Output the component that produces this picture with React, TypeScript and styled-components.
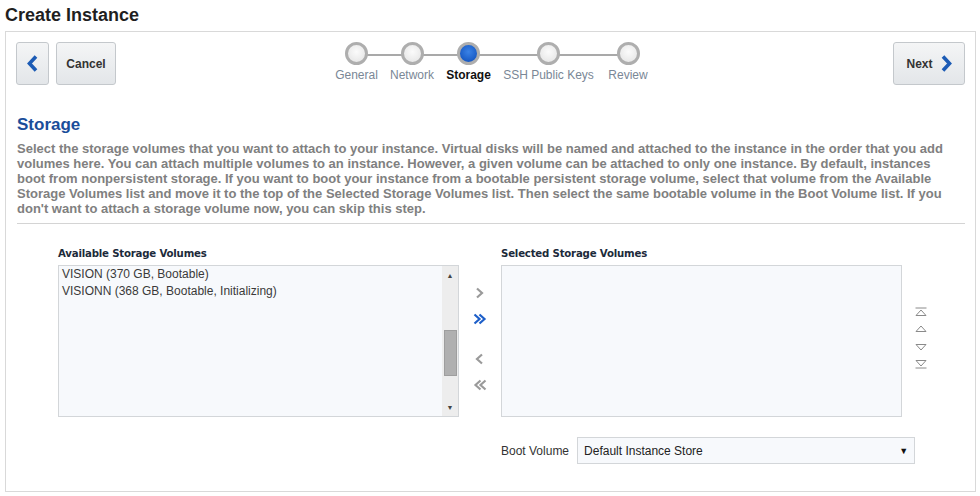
import React from "react";
import styled, { createGlobalStyle } from "styled-components";

const Global = createGlobalStyle`
  html, body { margin: 0; padding: 0; background: #fff; }
  body { font-family: Arial, "Liberation Sans", sans-serif; }
`;

const Page = styled.div`
  width: 980px;
  height: 496px;
  padding: 0 4px 0 5px;
  box-sizing: border-box;
  overflow: hidden;
`;

const Title = styled.h1`
  margin: 0;
  height: 31px;
  padding-top: 5px;
  box-sizing: border-box;
  font-size: 18px;
  font-weight: bold;
  color: #1f1f1f;
  line-height: 20px;
`;

const Panel = styled.div`
  border: 1px solid #d9d9d9;
  height: 461px;
  box-sizing: border-box;
  padding: 10px 10px 0 10px;
`;

const Toolbar = styled.div`
  display: grid;
  grid-template-columns: 1fr auto 1fr;
  align-items: start;
  height: 73px;
`;

const Left = styled.div`
  display: flex;
  gap: 7px;
`;

const Right = styled.div`
  display: flex;
  justify-content: flex-end;
`;

const Btn = styled.button<{ $w: number }>`
  width: ${(p) => p.$w}px;
  height: 43px;
  border: 1px solid #c4c8cc;
  border-radius: 3px;
  background: linear-gradient(#f4f5f6, #e3e6e9);
  font-family: Arial, "Liberation Sans", sans-serif;
  font-size: 12px;
  font-weight: bold;
  color: #333;
  display: flex;
  align-items: center;
  justify-content: center;
  gap: 8px;
  padding: 0;
  box-sizing: border-box;
`;

const Train = styled.div`
  display: flex;
  align-items: flex-start;
  margin-left: 4px;
`;

const Stop = styled.div<{ $w: number }>`
  width: ${(p) => p.$w}px;
  display: flex;
  flex-direction: column;
  align-items: center;
  position: relative;
`;

const Connector = styled.div<{ $l: number; $r: number }>`
  position: absolute;
  top: 12px;
  height: 2px;
  background: #a9a9a9;
  left: ${(p) => p.$l}px;
  right: ${(p) => p.$r}px;
`;

const Dot = styled.div<{ $active?: boolean }>`
  position: relative;
  z-index: 1;
  width: 23px;
  height: 23px;
  border-radius: 50%;
  box-sizing: border-box;
  border: 3px solid #aeaeae;
  background: ${(p) =>
    p.$active
      ? "radial-gradient(circle at 50% 40%, #3a82e6, #0c4cb8)"
      : "radial-gradient(circle at 50% 40%, #fbfbfb, #e2e2e2)"};
`;

const StopLabel = styled.div<{ $active?: boolean }>`
  margin-top: 3px;
  font-size: 12px;
  white-space: nowrap;
  color: ${(p) => (p.$active ? "#111" : "#7a8796")};
  font-weight: ${(p) => (p.$active ? "bold" : "normal")};
`;

const Heading = styled.h2`
  margin: 0;
  font-size: 17px;
  font-weight: bold;
  color: #1a4d9a;
  line-height: 20px;
  padding-left: 1px;
`;

const Para = styled.p`
  margin: 6px 0 0 1px;
  font-size: 13px;
  font-weight: bold;
  color: #808080;
  line-height: 15px;
  width: 941px;
`;

const Rule = styled.hr`
  margin: 7px 0 0 1px;
  border: 0;
  border-top: 1px solid #d4d4d4;
  width: 948px;
`;

const Shuttle = styled.div`
  display: grid;
  grid-template-columns: 401px 42px 401px 38px;
  margin: 23px 0 0 42px;
`;

const Col = styled.div`
  display: flex;
  flex-direction: column;
`;

const ListLabel = styled.div`
  font-family: "DejaVu Sans", Verdana, sans-serif;
  font-size: 10.2px;
  font-weight: bold;
  color: #1c2a3a;
  height: 14px;
  line-height: 14px;
  margin-bottom: 4px;
  letter-spacing: -0.2px;
`;

const ListBox = styled.div`
  height: 152px;
  border: 1px solid #d3d6d9;
  background: #f7f9fc;
  box-sizing: border-box;
  display: flex;
`;

const Items = styled.div`
  flex: 1;
  padding: 0 0 0 3px;
`;

const Item = styled.div`
  font-size: 12px;
  color: #3a3a3a;
  line-height: 17px;
`;

const Scroll = styled.div`
  width: 16px;
  background: #ededed;
  display: flex;
  flex-direction: column;
  align-items: center;
`;

const ScrollArrow = styled.div`
  height: 18px;
  display: flex;
  align-items: center;
  justify-content: center;
  font-size: 7px;
  color: #444;
`;

const Thumb = styled.div`
  width: 13px;
  height: 46px;
  margin-top: 46px;
  background: #b0b0b0;
  border: 1px solid #9e9e9e;
  box-sizing: border-box;
`;

const Spacer = styled.div`
  flex: 1;
`;

const MoveCol = styled.div`
  display: flex;
  flex-direction: column;
  align-items: center;
  padding-top: 33px;
`;

const IconSlot = styled.div<{ $h: number }>`
  height: ${(p) => p.$h}px;
  display: flex;
  align-items: center;
  justify-content: center;
`;

const OrderCol = styled.div`
  display: flex;
  flex-direction: column;
  align-items: center;
  padding-top: 57px;
`;

const BootRow = styled.div`
  display: flex;
  align-items: center;
  margin: 20px 0 0 485px;
  gap: 8px;
`;

const BootLabel = styled.span`
  font-size: 12px;
  color: #333;
`;

const Select = styled.div`
  width: 338px;
  height: 27px;
  border: 1px solid #d3d6d9;
  background: #f7f9fc;
  box-sizing: border-box;
  display: flex;
  align-items: center;
  justify-content: space-between;
  padding: 0 6px 0 6px;
  font-size: 12px;
  color: #222;
`;

const Caret = styled.span`
  font-size: 9px;
  color: #111;
`;

const Chevron = ({ dir, color }: { dir: "l" | "r"; color: string }) => (
  <svg width="11" height="17" viewBox="0 0 11 17">
    <path
      d={dir === "l" ? "M9 1.5 L2.5 8.5 L9 15.5" : "M2 1.5 L8.5 8.5 L2 15.5"}
      fill="none"
      stroke={color}
      strokeWidth="3.6"
    />
  </svg>
);

const Move = ({ dir, dbl, blue }: { dir: "l" | "r"; dbl?: boolean; blue?: boolean }) => {
  const stroke = blue ? "#1d5fc9" : "#9a9a9a";
  const one = (x: number) =>
    dir === "r" ? `M${x} 1.5 L${x + 5} 6 L${x} 10.5` : `M${x + 5} 1.5 L${x} 6 L${x + 5} 10.5`;
  return (
    <svg width="16" height="12" viewBox="0 0 16 12">
      {dbl ? (
        <>
          <path d={one(dir === "r" ? 2.5 : 3.5)} fill="none" stroke={stroke} strokeWidth="2.2" />
          <path d={one(dir === "r" ? 7.5 : 8.5)} fill="none" stroke={stroke} strokeWidth="2.2" />
        </>
      ) : (
        <path d={one(5)} fill="none" stroke={stroke} strokeWidth="2.2" />
      )}
    </svg>
  );
};

const Order = ({ up, bar }: { up: boolean; bar?: boolean }) => (
  <svg width="14" height="10" viewBox="0 0 14 10">
    {up ? (
      <>
        {bar && <path d="M1.5 1 H12.5" stroke="#8a8a8a" strokeWidth="1" />}
        <path d="M2 8.5 L7 3 L12 8.5 Z" fill="none" stroke="#8a8a8a" strokeWidth="1" />
      </>
    ) : (
      <>
        <path d="M2 1.5 L7 7 L12 1.5 Z" fill="none" stroke="#8a8a8a" strokeWidth="1" />
        {bar && <path d="M1.5 9 H12.5" stroke="#8a8a8a" strokeWidth="1" />}
      </>
    )}
  </svg>
);

const steps = [
  { label: "General", w: 55 },
  { label: "Network", w: 56 },
  { label: "Storage", w: 57, active: true },
  { label: "SSH Public Keys", w: 103 },
  { label: "Review", w: 56 },
];

export default function App() {
  return (
    <Page>
      <Global />
      <Title>Create Instance</Title>
      <Panel>
        <Toolbar>
          <Left>
            <Btn $w={33}>
              <Chevron dir="l" color="#1c5bb5" />
            </Btn>
            <Btn $w={60}>Cancel</Btn>
          </Left>
          <Train>
            {steps.map((s, i) => (
              <Stop key={s.label} $w={s.w}>
                {i > 0 && <Connector $l={0} $r={s.w / 2} />}
                {i < steps.length - 1 && <Connector $l={s.w / 2} $r={0} />}
                <Dot $active={s.active} />
                <StopLabel $active={s.active}>{s.label}</StopLabel>
              </Stop>
            ))}
          </Train>
          <Right>
            <Btn $w={72}>
              Next
              <Chevron dir="r" color="#1c5bb5" />
            </Btn>
          </Right>
        </Toolbar>
        <Heading>Storage</Heading>
        <Para>
          Select the storage volumes that you want to attach to your instance. Virtual disks will be
          named and attached to the instance in the order that you add volumes here. You can attach
          multiple volumes to an instance. However, a given volume can be attached to only one
          instance. By default, instances boot from nonpersistent storage. If you want to boot your
          instance from a bootable persistent storage volume, select that volume from the Available
          Storage Volumes list and move it to the top of the Selected Storage Volumes list. Then
          select the same bootable volume in the Boot Volume list. If you don't want to attach a
          storage volume now, you can skip this step.
        </Para>
        <Rule />
        <Shuttle>
          <Col>
            <ListLabel>Available Storage Volumes</ListLabel>
            <ListBox>
              <Items>
                <Item>VISION (370 GB, Bootable)</Item>
                <Item>VISIONN (368 GB, Bootable, Initializing)</Item>
              </Items>
              <Scroll>
                <ScrollArrow>▲</ScrollArrow>
                <Thumb />
                <Spacer />
                <ScrollArrow>▼</ScrollArrow>
              </Scroll>
            </ListBox>
          </Col>
          <MoveCol>
            <IconSlot $h={26}>
              <Move dir="r" />
            </IconSlot>
            <IconSlot $h={26}>
              <Move dir="r" dbl blue />
            </IconSlot>
            <IconSlot $h={14} />
            <IconSlot $h={26}>
              <Move dir="l" />
            </IconSlot>
            <IconSlot $h={26}>
              <Move dir="l" dbl />
            </IconSlot>
          </MoveCol>
          <Col>
            <ListLabel>Selected Storage Volumes</ListLabel>
            <ListBox />
          </Col>
          <OrderCol>
            <IconSlot $h={16}>
              <Order up bar />
            </IconSlot>
            <IconSlot $h={16}>
              <Order up />
            </IconSlot>
            <IconSlot $h={4} />
            <IconSlot $h={16}>
              <Order up={false} />
            </IconSlot>
            <IconSlot $h={16}>
              <Order up={false} bar />
            </IconSlot>
          </OrderCol>
        </Shuttle>
        <BootRow>
          <BootLabel>Boot Volume</BootLabel>
          <Select>
            <span>Default Instance Store</span>
            <Caret>▼</Caret>
          </Select>
        </BootRow>
      </Panel>
    </Page>
  );
}
